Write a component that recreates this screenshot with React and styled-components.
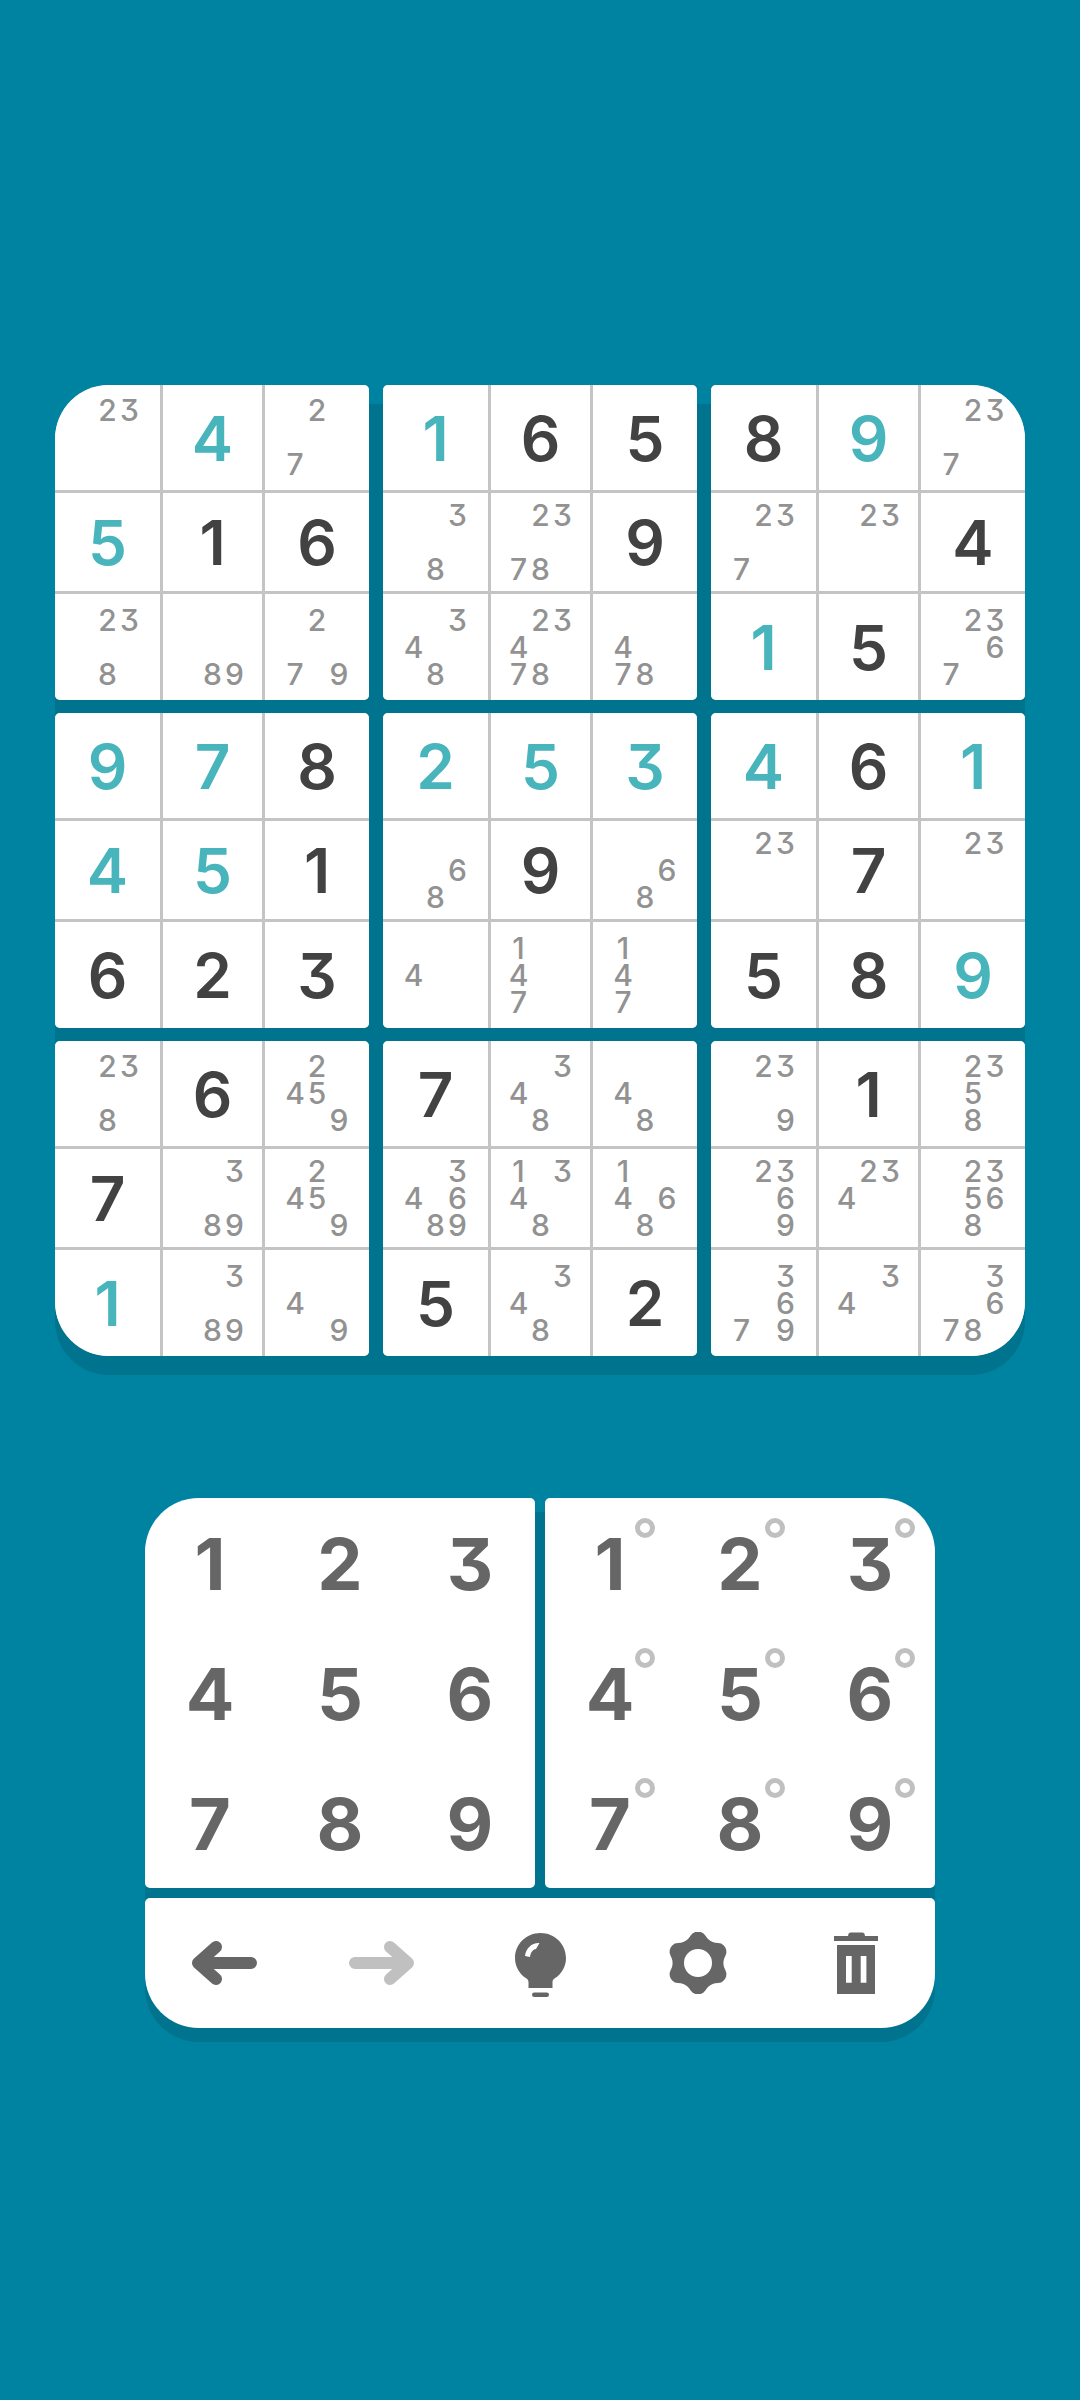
import React from "react"
import styled, { createGlobalStyle } from "styled-components"

const GlobalStyle = createGlobalStyle`
  html {
    background: #0083a1;
  }
  body {
    margin: 0;
    padding: 0;
    font-family: "Inter", "Noto Sans", sans-serif;
    font-feature-settings: "cv09" 1;
  }
`

// each cell: "t4" given in teal, "d6" dark digit, otherwise pencil marks
const CELLS = [
  ["23", "t4", "27", "t1", "d6", "d5", "d8", "t9", "237"],
  ["t5", "d1", "d6", "38", "2378", "d9", "237", "23", "d4"],
  ["238", "89", "279", "348", "23478", "478", "t1", "d5", "2367"],
  ["t9", "t7", "d8", "t2", "t5", "t3", "t4", "d6", "t1"],
  ["t4", "t5", "d1", "68", "d9", "68", "23", "d7", "23"],
  ["d6", "d2", "d3", "4", "147", "147", "d5", "d8", "t9"],
  ["238", "d6", "2459", "d7", "348", "48", "239", "d1", "2358"],
  ["d7", "389", "2459", "34689", "1348", "1468", "2369", "234", "23568"],
  ["t1", "389", "49", "d5", "348", "d2", "3679", "34", "3678"],
]

const DIGITS = [1, 2, 3, 4, 5, 6, 7, 8, 9]
const BIG_RADIUS = "54px"
const SMALL_RADIUS = "5px"

const Page = styled.div`
  width: 1080px;
  height: 2400px;
  padding-top: 385px;
  box-sizing: border-box;
  overflow: hidden;
  display: flex;
  flex-direction: column;
  align-items: center;
`

const Board = styled.div`
  position: relative;
  display: grid;
  grid-template-columns: repeat(3, 314px);
  grid-auto-rows: 315px;
  column-gap: 14px;
  row-gap: 13px;

  &::before {
    content: "";
    position: absolute;
    inset: 19px 0 -19px 0;
    background: #00748f;
    border-radius: ${BIG_RADIUS};
    z-index: -1;
  }
`

const Box = styled.div`
  display: grid;
  grid-template-columns: 105px 99px 104px;
  grid-template-rows: 105px 98px 106px;
  gap: 3px;
  background: #c4c4c4;
  overflow: hidden;
  border-radius: ${(p) => p.$radius};
`

const Cell = styled.div`
  background: #fff;
  display: flex;
  align-items: center;
  justify-content: center;
`

const BigDigit = styled.span`
  display: block;
  padding-top: 2px;
  font-size: 62px;
  line-height: 1;
  font-weight: 600;
  color: ${(p) => (p.$given ? "#48b4bc" : "#424242")};
`

const Notes = styled.div`
  display: grid;
  grid-template-columns: repeat(3, 22px);
  grid-template-rows: repeat(3, 27px);
  justify-items: center;
  align-items: center;
`

const Note = styled.span`
  display: block;
  font-size: 30px;
  line-height: 27px;
  font-weight: 500;
  color: #929292;
`

const Pad = styled.div`
  position: relative;
  margin-top: 142px;
  width: 790px;
  display: grid;
  grid-template-columns: 390px 390px;
  gap: 10px;

  &::before {
    content: "";
    position: absolute;
    inset: 14px 0 -14px 0;
    background: #00748f;
    border-radius: ${BIG_RADIUS};
    z-index: -1;
  }
`

const KeyPanel = styled.div`
  display: grid;
  grid-template-columns: repeat(3, 130px);
  grid-auto-rows: 130px;
  background: #fff;
  border-radius: ${(p) => p.$radius};
`

const Key = styled.div`
  display: flex;
  align-items: center;
  justify-content: center;
  padding-top: 2px;
  font-size: 72px;
  line-height: 1;
  font-weight: 700;
  color: #666;
`

const KeyInner = styled.span`
  position: relative;
`

const PencilRing = styled.span`
  position: absolute;
  left: calc(50% + 25px);
  top: calc(50% - 46px);
  width: 20px;
  height: 20px;
  box-sizing: border-box;
  border: 5.5px solid #c0c0c0;
  border-radius: 50%;
`

const Toolbar = styled.div`
  grid-column: 1 / 3;
  height: 130px;
  display: grid;
  grid-template-columns: repeat(5, 158px);
  background: #fff;
  border-radius: ${SMALL_RADIUS} ${SMALL_RADIUS} ${BIG_RADIUS} ${BIG_RADIUS};
`

const ToolButton = styled.div`
  display: flex;
  align-items: center;
  justify-content: center;
  color: ${(p) => (p.$disabled ? "#c0c0c0" : "#666")};
`

const boxRadius = (i) => {
  const c = (idx) => (i === idx ? BIG_RADIUS : SMALL_RADIUS)
  return `${c(0)} ${c(2)} ${c(8)} ${c(6)}`
}

const BackIcon = ({ flip }) => (
  <svg
    width="66"
    height="44"
    viewBox="0 0 66 44"
    fill="none"
    stroke="currentColor"
    strokeWidth="12"
    strokeLinecap="round"
    strokeLinejoin="round"
    transform={flip ? "scale(-1 1)" : undefined}
  >
    <path d="M60 22H7M25 6L7 22L25 38" />
  </svg>
)

const BulbIcon = () => (
  <svg width="51" height="64" viewBox="0 0 51 64" fill="currentColor" style={{ marginTop: 3 }}>
    <path d="M25.5 0C39.6 0 51 11.2 51 25C51 33.6 46.6 41 39.5 45.6C38 46.6 37.5 47.8 37.5 49.5V55H13.5V49.5C13.5 47.8 13 46.6 11.5 45.6C4.4 41 0 33.6 0 25C0 11.2 11.4 0 25.5 0Z" />
    <rect x="17" y="59.5" width="17" height="4.5" rx="2.2" />
    <path fill="#fff" d="M10 23C11 15 17 9.5 24.5 10L21 16C18 16.5 15.5 19.5 15 24Z" />
  </svg>
)

// six soft lobes round a centre hole
const gearPath = () => {
  const pts = []
  for (let a = 0; a < 360; a += 5) {
    const rad = (a * Math.PI) / 180
    const wave = Math.cos(6 * rad)
    const r = 28.4 + 3 * Math.sign(wave) * Math.pow(Math.abs(wave), 0.7)
    pts.push(`${(29 + r * Math.sin(rad)).toFixed(2)} ${(31 - r * Math.cos(rad)).toFixed(2)}`)
  }
  return `M${pts.join("L")}Z`
}

const GearIcon = () => (
  <svg width="58" height="62" viewBox="0 0 58 62" fill="currentColor">
    <path
      fillRule="evenodd"
      d={`${gearPath()}M29 17a14 14 0 1 0 0 28a14 14 0 1 0 0-28Z`}
    />
  </svg>
)

const TrashIcon = () => (
  <svg width="44" height="62" viewBox="0 0 44 62" fill="currentColor">
    <path d="M14 4.5C14 2 15 0.5 17 0.5H28C30 0.5 31 2 31 4.5Z" />
    <rect x="0" y="4" width="44" height="5" />
    <path
      fillRule="evenodd"
      d="M3 13H41V62H3ZM12 24V50.7H17.7V24ZM26.7 24V50.7H32.4V24Z"
    />
  </svg>
)

const BoardCell = ({ value }) => {
  if (value[0] === "t" || value[0] === "d") {
    return (
      <Cell>
        <BigDigit $given={value[0] === "t"}>{value[1]}</BigDigit>
      </Cell>
    )
  }
  return (
    <Cell>
      <Notes>
        {DIGITS.map((d) => (
          <Note key={d}>{value.includes(String(d)) ? d : ""}</Note>
        ))}
      </Notes>
    </Cell>
  )
}

const App = () => {
  const boxes = DIGITS.map((_, b) => {
    const top = Math.floor(b / 3) * 3
    const left = (b % 3) * 3
    return [0, 1, 2].flatMap((r) =>
      [0, 1, 2].map((c) => CELLS[top + r][left + c])
    )
  })

  return (
    <Page>
      <GlobalStyle />
      <Board>
        {boxes.map((cells, i) => (
          <Box key={i} $radius={boxRadius(i)}>
            {cells.map((v, j) => (
              <BoardCell key={j} value={v} />
            ))}
          </Box>
        ))}
      </Board>
      <Pad>
        <KeyPanel $radius={`${BIG_RADIUS} ${SMALL_RADIUS} ${SMALL_RADIUS} ${SMALL_RADIUS}`}>
          {DIGITS.map((d) => (
            <Key key={d}>{d}</Key>
          ))}
        </KeyPanel>
        <KeyPanel $radius={`${SMALL_RADIUS} ${BIG_RADIUS} ${SMALL_RADIUS} ${SMALL_RADIUS}`}>
          {DIGITS.map((d) => (
            <Key key={d}>
              <KeyInner>
                {d}
                <PencilRing />
              </KeyInner>
            </Key>
          ))}
        </KeyPanel>
        <Toolbar>
          <ToolButton>
            <BackIcon />
          </ToolButton>
          <ToolButton $disabled>
            <BackIcon flip />
          </ToolButton>
          <ToolButton>
            <BulbIcon />
          </ToolButton>
          <ToolButton>
            <GearIcon />
          </ToolButton>
          <ToolButton>
            <TrashIcon />
          </ToolButton>
        </Toolbar>
      </Pad>
    </Page>
  )
}

export default App
